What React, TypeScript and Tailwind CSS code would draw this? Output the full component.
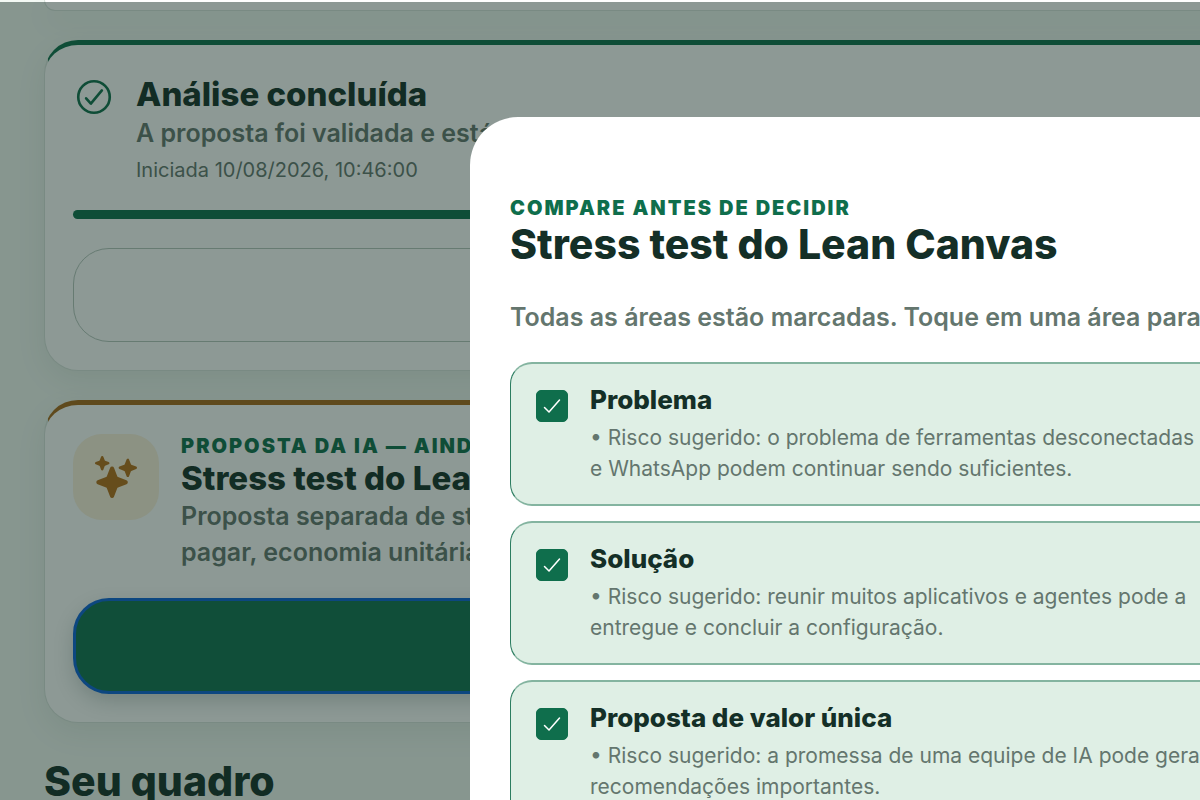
import { useState } from "react"
import { IoCheckmark, IoCheckmarkCircleOutline, IoSparkles } from "react-icons/io5"

type CanvasArea = {
  id: string
  title: string
  risk: string
}

const AREAS: CanvasArea[] = [
  {
    id: "problema",
    title: "Problema",
    risk: "• Risco sugerido: o problema de ferramentas desconectadas\ne WhatsApp podem continuar sendo suficientes."
  },
  {
    id: "solucao",
    title: "Solução",
    risk: "• Risco sugerido: reunir muitos aplicativos e agentes pode a\nentregue e concluir a configuração."
  },
  {
    id: "proposta",
    title: "Proposta de valor única",
    risk: "• Risco sugerido: a promessa de uma equipe de IA pode gerar\nrecomendações importantes."
  }
]

function AreaOption({ area, checked, onToggle }: { area: CanvasArea; checked: boolean; onToggle: () => void }) {
  return (
    <label
      htmlFor={area.id}
      className="flex items-start gap-[22px] rounded-[22px] border-x border-y-2 border-x-[#2c7d60] border-y-[#84b4a0] bg-[#dfefe5] pl-[25px] py-5"
    >
      <span className="relative mt-[6px] h-8 w-8 shrink-0">
        <input
          id={area.id}
          type="checkbox"
          checked={checked}
          onChange={onToggle}
          className="block h-full w-full appearance-none rounded-[5px] border border-[#0f6e4c] bg-white checked:bg-[#0f6e4c]"
        />
        {checked && <IoCheckmark className="pointer-events-none absolute inset-1 h-6 w-6 text-white" />}
      </span>
      <span className="block">
        <span className="block text-[26px] leading-8 font-extrabold text-[#142f27]">{area.title}</span>
        <span className="mt-[6px] block whitespace-pre text-[21px] leading-[31px] text-[#64766e]">{area.risk}</span>
      </span>
    </label>
  )
}

function CompareModal() {
  const [selected, setSelected] = useState<string[]>(AREAS.map(a => a.id))

  const toggle = (id: string) =>
    setSelected(prev => (prev.includes(id) ? prev.filter(x => x !== id) : [...prev, id]))

  return (
    <div className="fixed inset-x-0 top-0.5 bottom-0 overflow-hidden bg-[#102a22]/48 pt-[115px] pl-[470px]">
      <div
        role="dialog"
        aria-labelledby="compare-title"
        className="-mr-16 min-h-full rounded-t-[48px] bg-white px-10 pt-[79px]"
      >
        <p className="text-xl leading-6 font-black tracking-[2px] text-[#0f6e4c]">COMPARE ANTES DE DECIDIR</p>
        <h2 id="compare-title" className="text-[41px] leading-[48px] font-extrabold text-[#142f27]">
          Stress test do Lean Canvas
        </h2>
        <p className="mt-[31px] whitespace-nowrap text-[25px] leading-9 font-semibold text-[#64766e]">
          Todas as áreas estão marcadas. Toque em uma área para
        </p>
        <div className="mt-[27px] flex flex-col gap-[15px]">
          {AREAS.map(a => (
            <AreaOption key={a.id} area={a} checked={selected.includes(a.id)} onToggle={() => toggle(a.id)} />
          ))}
        </div>
      </div>
    </div>
  )
}

export default function App() {
  return (
    <div className="h-screen overflow-hidden bg-[#f3f9f4] font-['Inter',sans-serif]">
      <main className="-mr-16 flex flex-col pl-11">
        <div className="h-[11px] rounded-b-[34px] border border-t-0 border-[#d8e2dc] bg-white shadow-[0_10px_30px_rgba(20,47,39,0.08)]" />

        {/* Análise */}
        <section className="mt-[29px] rounded-[34px] border border-t-[5px] border-[#d8e2dc] border-t-[#0f6e4c] bg-white px-7 pt-7 pb-7 shadow-[0_10px_30px_rgba(20,47,39,0.08)]">
          <div className="flex items-start gap-[21px]">
            <IoCheckmarkCircleOutline className="mt-[3px] h-[42px] w-[42px] shrink-0 text-[#0f6e4c]" />
            <div className="whitespace-nowrap">
              <h3 className="text-[33px] leading-[42px] font-extrabold text-[#142f27]">Análise concluída</h3>
              <p className="text-[25px] leading-9 font-semibold text-[#64766e]">A proposta foi validada e está</p>
              <p className="mt-1 text-xl leading-[30px] text-[#64766e]">Iniciada 10/08/2026, 10:46:00</p>
            </div>
          </div>
          <div role="progressbar" aria-valuenow={100} className="mt-[25px] h-[9px] rounded-full bg-[#0f6e4c]" />
          <button aria-label="Ver análise" className="mt-[29px] block h-[94px] w-full rounded-[36px] border border-[#b6c5bd]" />
        </section>

        {/* Proposta */}
        <section className="mt-[29px] rounded-[34px] border border-t-[5px] border-[#d8e2dc] border-t-[#a8681a] bg-white px-7 pt-[29px] pb-7 shadow-[0_10px_30px_rgba(20,47,39,0.08)]">
          <div className="flex items-start gap-[22px]">
            <div className="flex h-[86px] w-[86px] shrink-0 items-center justify-center rounded-[29px] bg-[#fdf1dc]">
              <IoSparkles className="h-[42px] w-[42px] text-[#b56d18]" />
            </div>
            <div className="whitespace-nowrap">
              <p className="text-xl leading-6 font-black tracking-[2px] text-[#0f6e4c]">PROPOSTA DA IA — AINDA</p>
              <h3 className="text-[33px] leading-10 font-extrabold text-[#142f27]">Stress test do Lean Canvas</h3>
              <p className="text-[25px] leading-9 font-semibold text-[#64766e]">
                Proposta separada de stress
                <br />
                pagar, economia unitária
              </p>
            </div>
          </div>
          <button
            aria-label="Comparar proposta"
            className="mt-[28px] block h-[96px] w-full rounded-[36px] border-[3px] border-[#0b62d6] bg-[#117050] shadow-[0_8px_20px_rgba(20,47,39,0.2)]"
          />
        </section>

        <h2 className="mt-[33px] text-[41px] leading-[50px] font-extrabold text-[#142f27]">Seu quadro</h2>
      </main>
      <CompareModal />
    </div>
  )
}
